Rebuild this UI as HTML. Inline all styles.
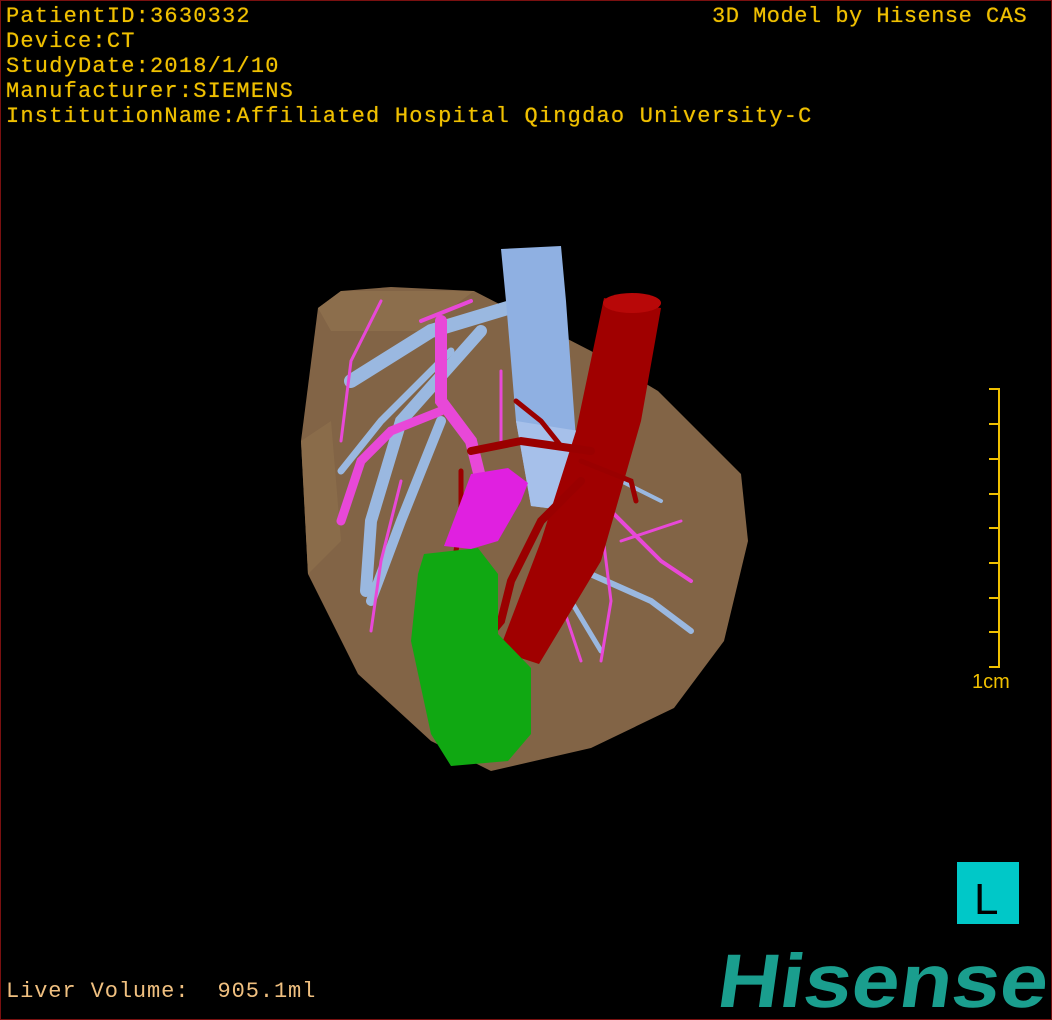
<!DOCTYPE html>
<html><head><meta charset="utf-8"><style>
html,body{margin:0;padding:0;background:#000;}
#v{position:relative;width:1050px;height:1018px;border:1px solid #7a1010;background:#000;overflow:hidden;}
.t{position:absolute;font-family:"Liberation Mono",monospace;font-size:22px;color:#f0c000;white-space:pre;line-height:25px;letter-spacing:1.2px;text-shadow:0 0 0.6px #f0c000;}
</style></head><body><div id="v">
<div class="t" style="left:5px;top:3px">PatientID:3630332
Device:CT
StudyDate:2018/1/10
Manufacturer:SIEMENS
InstitutionName:Affiliated Hospital Qingdao University-C</div>
<div class="t" style="left:711px;top:3px;letter-spacing:0.5px">3D Model by Hisense CAS</div>
<div class="t" style="left:5px;top:978px;color:#f0c080;text-shadow:none;letter-spacing:0.9px">Liver Volume:  905.1ml</div>
<svg width="1050" height="1018" style="position:absolute;left:0;top:0">
<path d="M340,290 L390,286 L473,290 L590,350 L657,390 L740,473 L747,540 L723,640 L673,707 L590,747 L490,770 L430,740 L357,673 L307,573 L300,440 L317,307 Z" fill="#826446"/>
<path d="M340,290 L473,290 L420,330 L330,330 L317,307Z" fill="#8c6e4c"/>
<path d="M300,440 L330,420 L340,540 L307,573Z" fill="#8a6c4a"/>
<g stroke="#9ab8e0" stroke-linecap="round" fill="none">
<path d="M530,300 L430,330 L350,380" stroke-width="14"/>
<path d="M480,330 L400,420 L370,520 L365,590" stroke-width="12"/>
<path d="M440,420 L400,520 L370,600" stroke-width="10"/>
<path d="M450,350 L380,420 L340,470" stroke-width="7"/>
<path d="M560,560 L650,600 L690,630" stroke-width="6"/>
<path d="M570,600 L600,650" stroke-width="5"/>
<path d="M600,470 L660,500" stroke-width="4"/>
</g>
<path d="M500,248 L560,245 L565,300 L578,480 L570,510 L530,505 L515,420 L505,300Z" fill="#8fb0e2"/>
<path d="M515,420 L578,430 L578,480 L570,510 L530,505Z" fill="#a6c0ea"/>
<g stroke="#e848d8" stroke-linecap="round" fill="none">
<path d="M440,320 L440,400 L470,440 L480,480" stroke-width="12"/>
<path d="M440,410 L390,430 L360,460 L340,520" stroke-width="9"/>
<path d="M380,300 L350,360 L340,440" stroke-width="3"/>
<path d="M400,480 L380,560 L370,630" stroke-width="3"/>
<path d="M600,500 L660,560 L690,580" stroke-width="4"/>
<path d="M600,520 L610,600 L600,660" stroke-width="3"/>
<path d="M620,540 L680,520" stroke-width="3"/>
<path d="M560,600 L580,660" stroke-width="3"/>
<path d="M500,370 L500,440" stroke-width="3"/>
<path d="M420,320 L470,300" stroke-width="4"/>
</g>
<path d="M603,297 L660,307 L640,420 L600,560 L538,663 L498,650 L540,540 L575,430 Z" fill="#a00000"/>
<ellipse cx="631" cy="302" rx="29" ry="10" fill="#b80808"/>
<g stroke="#9a0000" stroke-linecap="round" fill="none">
<path d="M590,450 L520,440 L470,450" stroke-width="8"/>
<path d="M560,445 L540,420 L515,400" stroke-width="5"/>
<path d="M580,480 L540,520 L510,580 L500,620 L475,650" stroke-width="8"/>
<path d="M580,460 L630,480 L635,500" stroke-width="5"/>
<path d="M460,470 L460,520 L450,580" stroke-width="5"/>
</g>
<path d="M423,553 L477,547 L497,573 L497,633 L530,667 L530,733 L507,760 L450,765 L430,733 L410,640 L417,573Z" fill="#10a812"/>
<path d="M443,545 L460,500 L470,473 L507,467 L527,482 L520,500 L497,540 L470,548Z" fill="#e020e0"/>
<g stroke="#f0c000" stroke-width="2">
<line x1="998" y1="387" x2="998" y2="667"/>
<line x1="988" y1="388" x2="998" y2="388"/><line x1="988" y1="423" x2="998" y2="423"/><line x1="988" y1="458" x2="998" y2="458"/><line x1="988" y1="493" x2="998" y2="493"/><line x1="988" y1="527" x2="998" y2="527"/><line x1="988" y1="562" x2="998" y2="562"/><line x1="988" y1="597" x2="998" y2="597"/><line x1="988" y1="631" x2="998" y2="631"/><line x1="988" y1="666" x2="998" y2="666"/>
</g>
<text x="971" y="687" font-family="Liberation Sans,sans-serif" font-size="20" fill="#f0c000">1cm</text>
<rect x="956" y="861" width="62" height="62" fill="#00c8c8"/>
<text x="973" y="913" font-family="Liberation Sans,sans-serif" font-size="44" fill="#000">L</text>
<g transform="translate(714,1006) skewX(-8)">
<text x="0" y="0" font-family="Liberation Sans,sans-serif" font-weight="bold" font-size="76" fill="#1a9e8e" textLength="330" lengthAdjust="spacingAndGlyphs">Hisense</text>
</g>
</svg>
</div></body></html>
